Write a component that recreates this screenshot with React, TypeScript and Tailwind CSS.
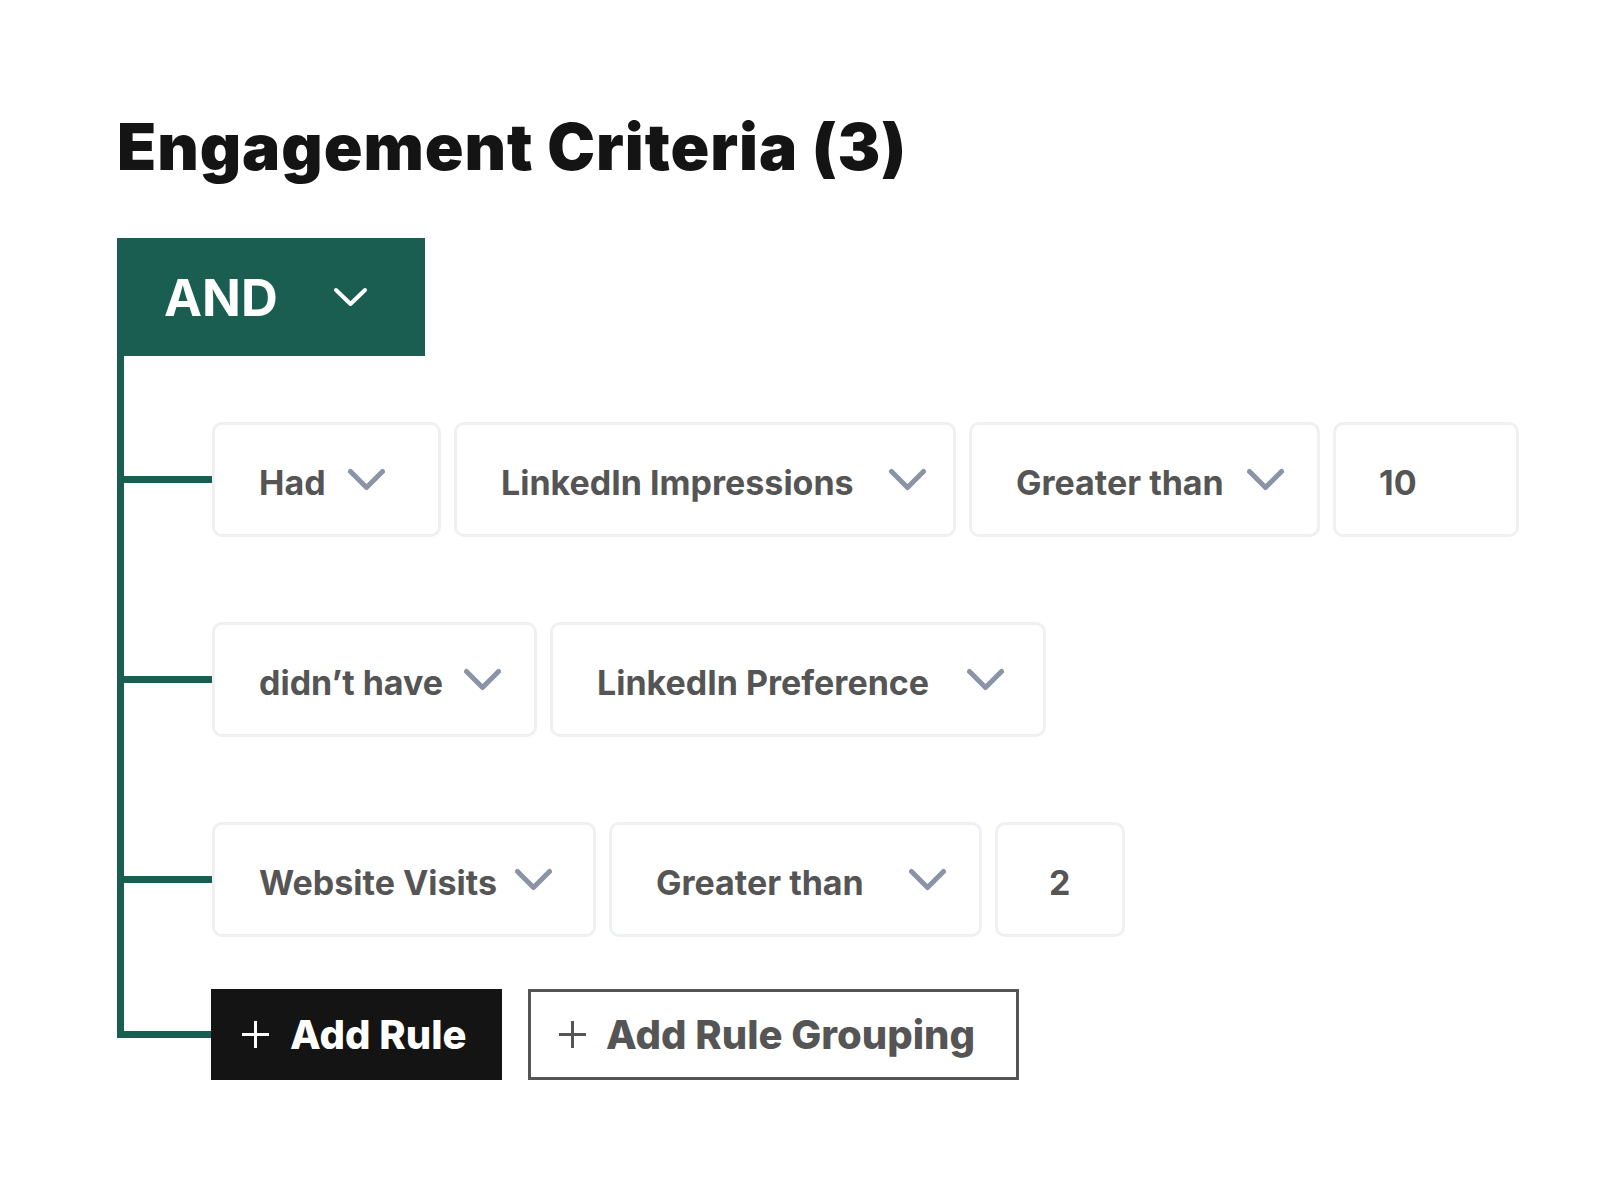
import React from 'react'

const GREEN = 'bg-[#1a5e52]'

function Chevron({ className = '', color = '#8a94a6', w = 39, h = 23, sw = 5 }: { className?: string; color?: string; w?: number; h?: number; sw?: number }) {
  return (
    <svg width={w} height={h} viewBox={`0 0 ${w} ${h}`} className={className} fill="none">
      <path d={`M${sw / 2 + 1} ${sw / 2 + 1} L${w / 2} ${h - sw / 2 - 1} L${w - sw / 2 - 1} ${sw / 2 + 1}`} stroke={color} strokeWidth={sw} strokeLinecap="round" strokeLinejoin="round" />
    </svg>
  )
}

function Plus({ color, size = 31 }: { color: string; size?: number }) {
  return (
    <svg width={size} height={size} viewBox="0 0 31 31" fill="none">
      <path d="M15.5 2 V29 M2 15.5 H29" stroke={color} strokeWidth={3} />
    </svg>
  )
}

// a dropdown pill: fixed width so the chevron sits where the design has it
function Select({ label, width, pr = 32 }: { label: string; width: number; pr?: number }) {
  return (
    <div
      className="h-[115px] flex items-center justify-between pl-[44px] border-[3px] border-[#eef0f4] rounded-[10px] bg-white"
      style={{ width, paddingRight: pr }}
    >
      <span className="mt-[5px] text-[34px] font-bold text-[#555555] whitespace-nowrap">{label}</span>
      <Chevron />
    </div>
  )
}

function Value({ value, width, pl }: { value: string; width: number; pl: number }) {
  return (
    <div
      className="h-[115px] flex items-center border-[3px] border-[#eef0f4] rounded-[10px] bg-white"
      style={{ width, paddingLeft: pl }}
    >
      <span className="mt-[5px] text-[34px] font-bold text-[#555555]">{value}</span>
    </div>
  )
}

function Row({ children }: { children: React.ReactNode }) {
  return (
    <div className="flex items-center">
      <div className={`w-[88px] h-[7px] ${GREEN}`} />
      <div className="flex gap-[13px]">{children}</div>
    </div>
  )
}

export default function App() {
  return (
    <div className="min-h-screen bg-white pl-[117px] pt-[115px]" style={{ fontFamily: 'Inter, "Noto Sans", sans-serif' }}>
      <h1 className="text-[64px] leading-none font-black text-[#141414] tracking-[0.015em] h-[123px]">
        Engagement Criteria (3)
      </h1>

      <div className={`w-[308px] h-[118px] ${GREEN} flex items-center pl-[47px] gap-[55px]`}>
        <span className="text-[51px] font-bold text-white leading-none">AND</span>
        <Chevron color="#ffffff" w={35} h={20} sw={4} />
      </div>

      <div className="border-l-[7px] border-[#1a5e52] pt-[66px] pb-[52px] flex flex-col gap-[85px]">
        <Row>
          <Select label="Had" width={229} pr={52} />
          <Select label="LinkedIn Impressions" width={502} pr={26} />
          <Select label="Greater than" width={351} />
          <Value value="10" width={186} pl={43} />
        </Row>
        <Row>
          <Select label="didn’t have" width={325} />
          <Select label="LinkedIn Preference" width={496} pr={38} />
        </Row>
        <Row>
          <Select label="Website Visits" width={384} pr={40} />
          <Select label="Greater than" width={373} />
          <Value value="2" width={130} pl={51} />
        </Row>
      </div>

      <div className="flex items-start">
        <div className="w-[94px] h-[49px] border-l-[7px] border-b-[7px] border-[#1a5e52]" />
        <button className="h-[91px] w-[291px] bg-[#141414] flex items-center pl-[29px] gap-[19px]">
          <Plus color="#ffffff" />
          <span className="text-[40px] font-extrabold text-white leading-none">Add Rule</span>
        </button>
        <button className="ml-[26px] h-[91px] w-[491px] border-[3px] border-[#555555] bg-white flex items-center pl-[26px] gap-[18px]">
          <Plus color="#555555" />
          <span className="text-[40px] font-extrabold text-[#555555] leading-none">Add Rule Grouping</span>
        </button>
      </div>
    </div>
  )
}
